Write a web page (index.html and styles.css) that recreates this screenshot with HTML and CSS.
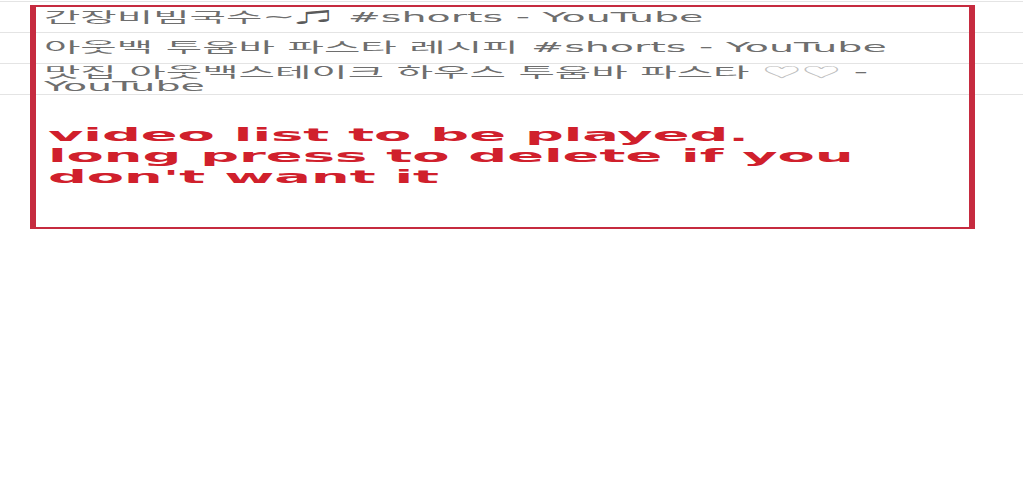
FILE: index.html
```html
<!DOCTYPE html>
<html lang="ko">
<head>
<meta charset="utf-8">
<title>Playlist</title>
<link rel="stylesheet" href="styles.css">
</head>
<body>
<div class="stage">
  <ul class="list">
    <li class="row"><span class="title">간장비빔국수~<span class="note">♫</span> #shorts - YouTube</span></li>
    <li class="row"><span class="title">아웃백 투움바 파스타 레시피 #shorts - YouTube</span></li>
    <li class="row"><span class="title">맛집 아웃백스테이크 하우스 투움바 파스타 <span class="hearts">♡♡</span> - YouTube</span></li>
  </ul>
  <div class="callout">
    <p class="hint">video list to be played.<br>long press to delete if you don't want it</p>
  </div>
</div>
</body>
</html>
```
FILE: styles.css
```css
html, body {
  margin: 0;
  padding: 0;
  background: #ffffff;
  overflow: hidden;
}

.stage {
  position: relative;
  width: 341.333px;
  height: 500px;
  transform: scaleX(3);
  transform-origin: 0 0;
  font-family: "DejaVu Sans", "Noto Sans CJK KR", sans-serif;
}

.list {
  margin: 1px 0 0;
  padding: 0;
  list-style: none;
  border-top: 1px solid #e4e4e4;
}

.row {
  display: flex;
  align-items: center;
  min-height: 31px;
  box-sizing: border-box;
  padding: 0 8px 0 14.67px;
  border-bottom: 1px solid #e4e4e4;
  font-size: 13.2px;
  line-height: 14px;
  color: #6e6e6e;
}

.title {
  display: block;
}

.note {
  font-family: "Noto Sans CJK KR", sans-serif;
  color: #5a5a5a;
}

.hearts {
  font-family: "Noto Sans CJK KR", sans-serif;
  color: #c0c0c0;
}

.callout {
  position: absolute;
  top: 4px;
  left: 9.67px;
  width: 315.33px;
  height: 224px;
  box-sizing: border-box;
  border: 2px solid #c62b3f;
  padding: 117px 4px 0 4.33px;
}

.hint {
  margin: 0;
  font-family: "DejaVu Sans", sans-serif;
  font-weight: bold;
  font-size: 18.1px;
  line-height: 21px;
  color: #d0202c;
}
```
